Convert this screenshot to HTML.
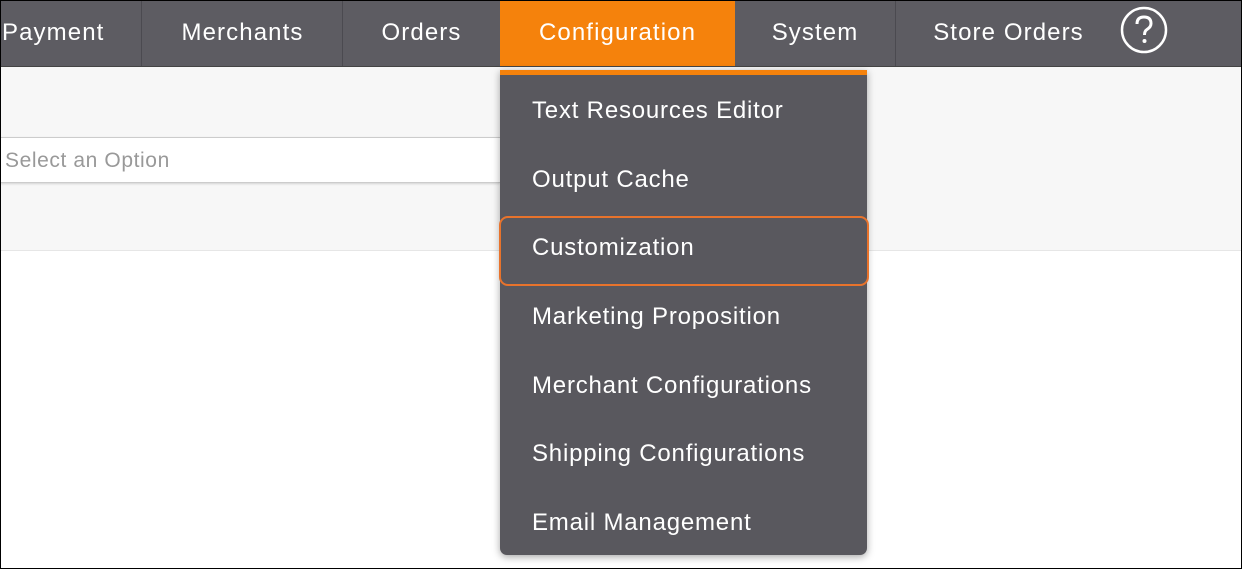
<!DOCTYPE html>
<html><head><style>
body{margin:0;width:1242px;height:569px;overflow:hidden;background:#fff;font-family:"Liberation Sans",sans-serif;position:relative}
.frame{position:absolute;left:0;top:0;width:1240px;height:567px;border:1px solid #000;box-sizing:content-box}
.nav{position:absolute;left:0;top:0;width:1242px;height:66px;background:#5d5c62;border-bottom:1px solid #444}
.nav div{position:absolute;top:0;height:66px;line-height:66px;color:#fff;font-size:24px;letter-spacing:1.1px;text-align:center;border-right:1px solid #4b4a50}
.gray{position:absolute;left:0;top:67px;width:1242px;height:183px;background:#f7f7f7;border-bottom:1px solid #e6e6e6}
.sel{position:absolute;left:0;top:137px;width:500px;height:46px;background:#fff;border-top:1px solid #ccc;border-bottom:1px solid #ccc;box-shadow:0 1px 2px rgba(0,0,0,.15);color:#999;font-size:21px;letter-spacing:.6px;line-height:46px;padding-left:5px;box-sizing:border-box}
.dd{position:absolute;left:500px;top:70px;width:367px;height:485px;background:#59585e;border-top:5px solid #f5820c;box-sizing:border-box;border-radius:0 0 7px 7px;box-shadow:0 2px 8px rgba(0,0,0,.35)}
.it{position:absolute;left:532px;color:#fff;font-size:24px;letter-spacing:.8px;line-height:30px}
.hl{position:absolute;left:499px;top:216px;width:370px;height:70px;border:2px solid #e8732c;border-radius:9px;box-sizing:border-box}
</style></head><body>
<div class="nav">
<div style="left:0;width:142px;text-align:left;padding-left:2px;box-sizing:border-box">Payment</div>
<div style="left:143px;width:199px">Merchants</div>
<div style="left:343px;width:157px">Orders</div>
<div style="left:500px;width:235px;background:#f5820c;border-right:none">Configuration</div>
<div style="left:735px;width:160px">System</div>
<div style="left:896px;width:225px;border-right:none">Store Orders</div>
<svg style="position:absolute;left:1120px;top:6px" width="48" height="48" viewBox="0 0 48 48"><circle cx="24" cy="24" r="22" fill="none" stroke="#fff" stroke-width="2.5"/><path d="M17 18 Q17 11 24 11 Q31 11 31 17.5 Q31 21 27 23.5 Q24.5 25 24.5 29" fill="none" stroke="#fff" stroke-width="3"/><circle cx="24.5" cy="35" r="2" fill="#fff"/></svg>
</div>
<div class="gray"></div>
<div class="sel">Select an Option</div>
<div class="dd"></div>
<div class="hl"></div>
<div class="it" style="top:96px">Text Resources Editor</div>
<div class="it" style="top:165px">Output Cache</div>
<div class="it" style="top:233px">Customization</div>
<div class="it" style="top:302px">Marketing Proposition</div>
<div class="it" style="top:371px">Merchant Configurations</div>
<div class="it" style="top:439px">Shipping Configurations</div>
<div class="it" style="top:508px">Email Management</div>
<div class="frame"></div>
</body></html>
